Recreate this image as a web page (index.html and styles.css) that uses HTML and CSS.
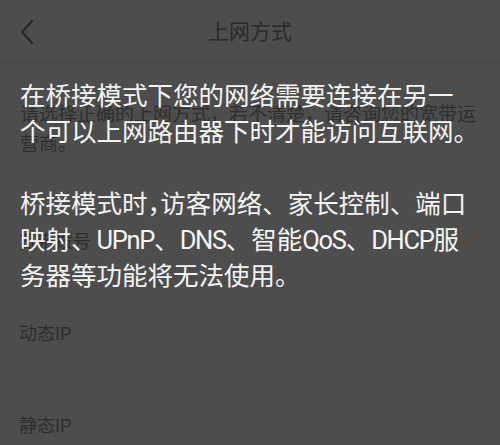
FILE: index.html
```html
<!DOCTYPE html>
<html lang="zh-CN">
<head>
<meta charset="utf-8">
<title>上网方式</title>
<link rel="stylesheet" href="styles.css">
</head>
<body>
<div class="screen">
  <header class="topbar">
    <svg class="back" width="16" height="26" viewBox="0 0 16 26"><path d="M13 2 L3 13 L13 24" fill="none" stroke="#262626" stroke-width="2.2" stroke-linecap="round" stroke-linejoin="round"/></svg>
    <h1 class="title">上网方式</h1>
  </header>
  <p class="intro">请选择正确的上网方式，若不清楚，请咨询您的宽带运营商。</p>
  <ul class="options">
    <li class="option option-first">
      <span>宽带拨号</span>
      <svg class="check" width="24" height="18" viewBox="0 0 24 18"><path d="M2 9 L9 15 L22 3" fill="none" stroke="#5e4636" stroke-width="2.2" stroke-linecap="round" stroke-linejoin="round"/></svg>
    </li>
    <li class="option">动态IP</li>
    <li class="option">静态IP</li>
  </ul>
  <div class="overlay">
    <p class="tip">在桥接模式下您的网络需要连接在另一<br>个可以上网路由器下时才能访问互联网。</p>
    <p class="tip">桥接模式时<span class="half">，</span>访客网络、家长控制、端口<br>映射、<span class="latin">UPnP</span>、<span class="latin">DNS</span>、智能<span class="latin">QoS</span>、<span class="latin">DHCP</span>服<br>务器等功能将无法使用。</p>
  </div>
</div>
</body>
</html>
```

FILE: styles.css
```css
html, body {
  margin: 0;
  padding: 0;
}
body {
  background: #4d4d4d;
  font-family: Roboto, "Noto Sans CJK SC", sans-serif;
  text-autospace: no-autospace;
}
.screen {
  position: relative;
  width: 500px;
  height: 445px;
  overflow: hidden;
  background: #4d4d4d;
}
.topbar {
  height: 63px;
  display: flex;
  align-items: center;
  justify-content: center;
  position: relative;
  border-bottom: 1px solid #464646;
  box-sizing: border-box;
}
.back {
  position: absolute;
  left: 19px;
  top: 19px;
}
.title {
  margin: 0;
  font-size: 21px;
  font-weight: 400;
  color: #2b2b2b;
  padding-bottom: 2px;
}
.intro {
  margin: 0;
  padding: 37px 10px 31px 20px;
  font-size: 19px;
  line-height: 30px;
  color: #2f2f2f;
}
.options {
  list-style: none;
  margin: 0;
  padding: 0;
}
.option {
  height: 92px;
  display: flex;
  align-items: center;
  justify-content: space-between;
  padding: 0 20px 0 19px;
  box-sizing: border-box;
  font-size: 18px;
  color: #2e2e2e;
  border-bottom: 1px solid #494949;
}
.option-first {
  height: 95px;
  padding-top: 3px;
}
.check {
  margin-right: -2px;
}
.overlay {
  position: absolute;
  left: 0;
  top: 0;
  right: 0;
  bottom: 0;
  padding: 78px 0 0 20px;
  display: flex;
  flex-direction: column;
  gap: 36px;
}
.tip {
  margin: 0;
  font-size: 25.5px;
  line-height: 36px;
  color: #f4f4f4;
  white-space: nowrap;
  text-autospace: no-autospace;
}
.half {
  font-feature-settings: "halt";
}
.latin {
  font-family: Roboto, sans-serif;
  letter-spacing: -1.3px;
}
```
